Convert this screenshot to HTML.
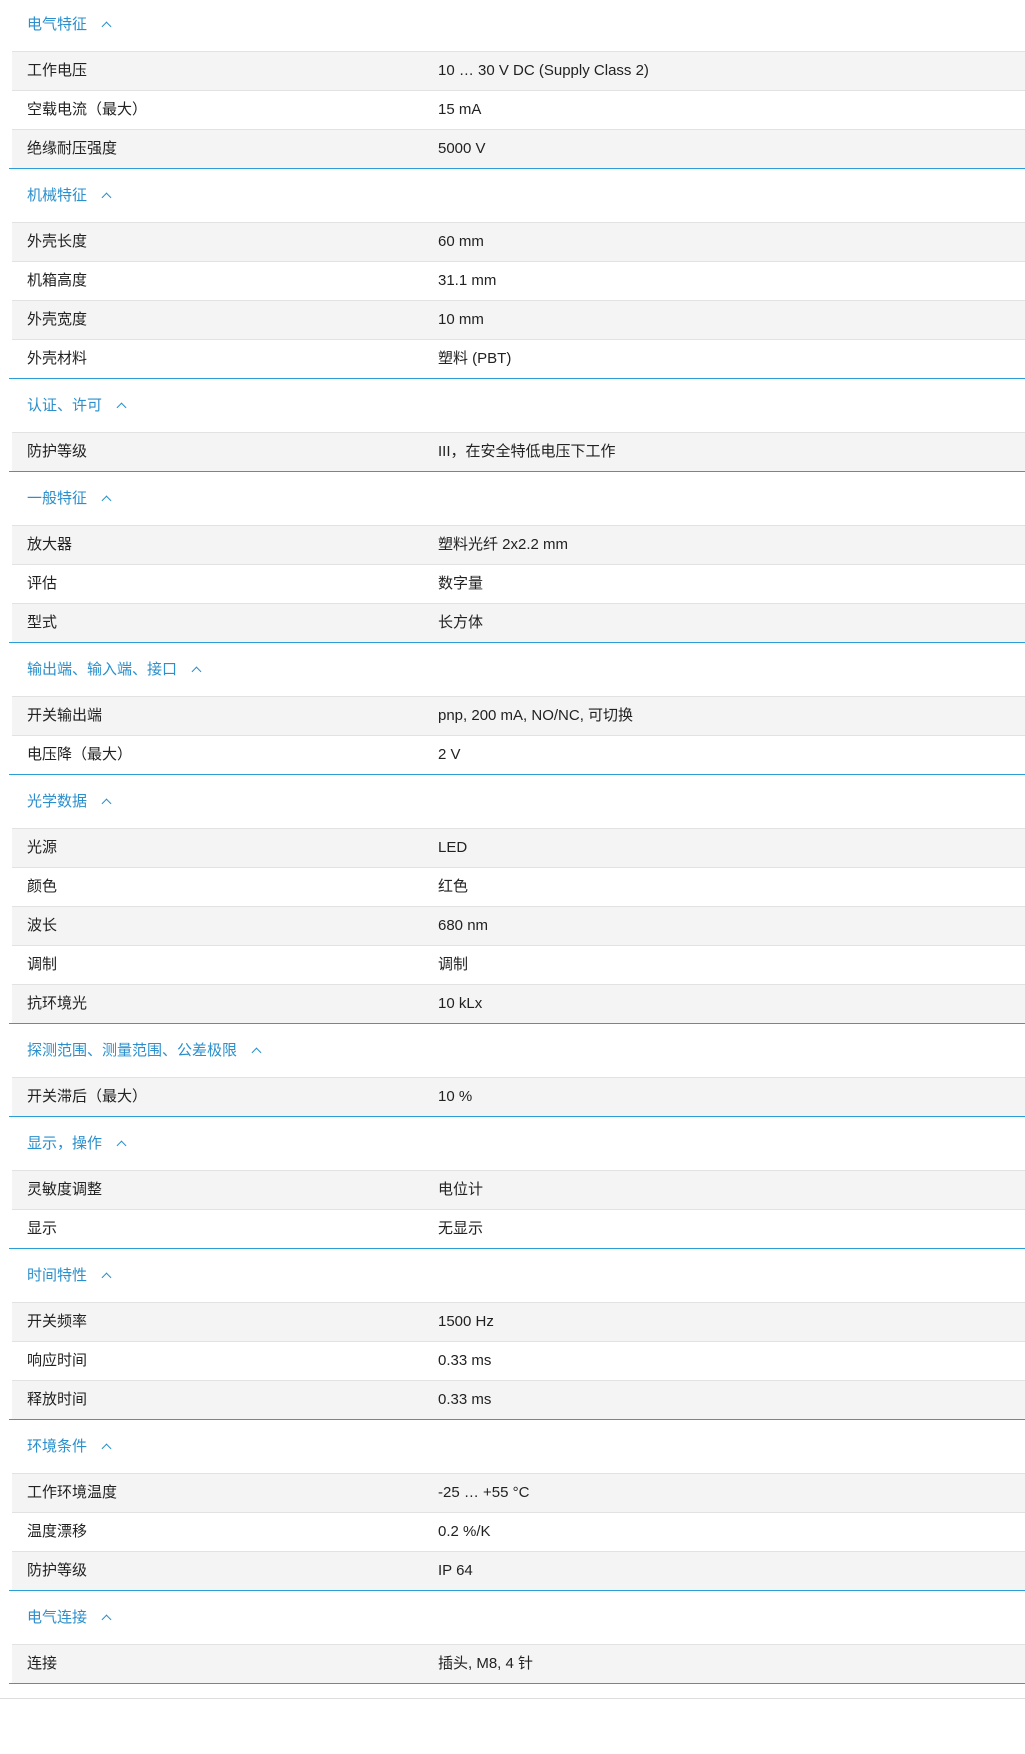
<!DOCTYPE html>
<html><head><meta charset="utf-8"><style>
*{box-sizing:border-box;margin:0;padding:0}
body{width:1025px;height:1754px;background:#fff;font-family:"Liberation Sans","Noto Sans CJK SC",sans-serif;font-size:15px;color:#222;overflow:hidden;position:relative}
.sec{margin-left:9px;width:1016px;border-bottom:1px solid #2a9fd6}
.h{height:53px;line-height:53px;padding-left:18px;color:#2a8fcc;font-size:15px}
.sec:first-child .h{height:51px;line-height:50px}
.h i{display:inline-block;width:7px;height:7px;border-left:1.3px solid #2a8fcc;border-top:1.3px solid #2a8fcc;transform:rotate(45deg);margin-left:16px;vertical-align:-1px}
.r{margin-left:3px;height:39px;line-height:38px;border-top:1px solid #e2e2e2;background:#f4f4f4;position:relative;padding-left:15px}
.r:nth-child(odd){background:#fff}
.r span{position:absolute;left:426px;top:0}
.end{position:absolute;top:1698px;left:0;width:1025px;border-top:1px solid #ddd}
</style></head><body>
<div class="sec"><div class="h">电气特征<i></i></div>
<div class="r">工作电压<span>10 … 30 V DC (Supply Class 2)</span></div>
<div class="r">空载电流（最大）<span>15 mA</span></div>
<div class="r">绝缘耐压强度<span>5000 V</span></div></div>
<div class="sec"><div class="h">机械特征<i></i></div>
<div class="r">外壳长度<span>60 mm</span></div>
<div class="r">机箱高度<span>31.1 mm</span></div>
<div class="r">外壳宽度<span>10 mm</span></div>
<div class="r">外壳材料<span>塑料 (PBT)</span></div></div>
<div class="sec"><div class="h">认证、许可<i></i></div>
<div class="r">防护等级<span>III，在安全特低电压下工作</span></div></div>
<div class="sec"><div class="h">一般特征<i></i></div>
<div class="r">放大器<span>塑料光纤 2x2.2 mm</span></div>
<div class="r">评估<span>数字量</span></div>
<div class="r">型式<span>长方体</span></div></div>
<div class="sec"><div class="h">输出端、输入端、接口<i></i></div>
<div class="r">开关输出端<span>pnp, 200 mA, NO/NC, 可切换</span></div>
<div class="r">电压降（最大）<span>2 V</span></div></div>
<div class="sec"><div class="h">光学数据<i></i></div>
<div class="r">光源<span>LED</span></div>
<div class="r">颜色<span>红色</span></div>
<div class="r">波长<span>680 nm</span></div>
<div class="r">调制<span>调制</span></div>
<div class="r">抗环境光<span>10 kLx</span></div></div>
<div class="sec"><div class="h">探测范围、测量范围、公差极限<i></i></div>
<div class="r">开关滞后（最大）<span>10 %</span></div></div>
<div class="sec"><div class="h">显示，操作<i></i></div>
<div class="r">灵敏度调整<span>电位计</span></div>
<div class="r">显示<span>无显示</span></div></div>
<div class="sec"><div class="h">时间特性<i></i></div>
<div class="r">开关频率<span>1500 Hz</span></div>
<div class="r">响应时间<span>0.33 ms</span></div>
<div class="r">释放时间<span>0.33 ms</span></div></div>
<div class="sec"><div class="h">环境条件<i></i></div>
<div class="r">工作环境温度<span>-25 … +55 °C</span></div>
<div class="r">温度漂移<span>0.2 %/K</span></div>
<div class="r">防护等级<span>IP 64</span></div></div>
<div class="sec"><div class="h">电气连接<i></i></div>
<div class="r">连接<span>插头, M8, 4 针</span></div></div>
<div class="end"></div>
</body></html>
